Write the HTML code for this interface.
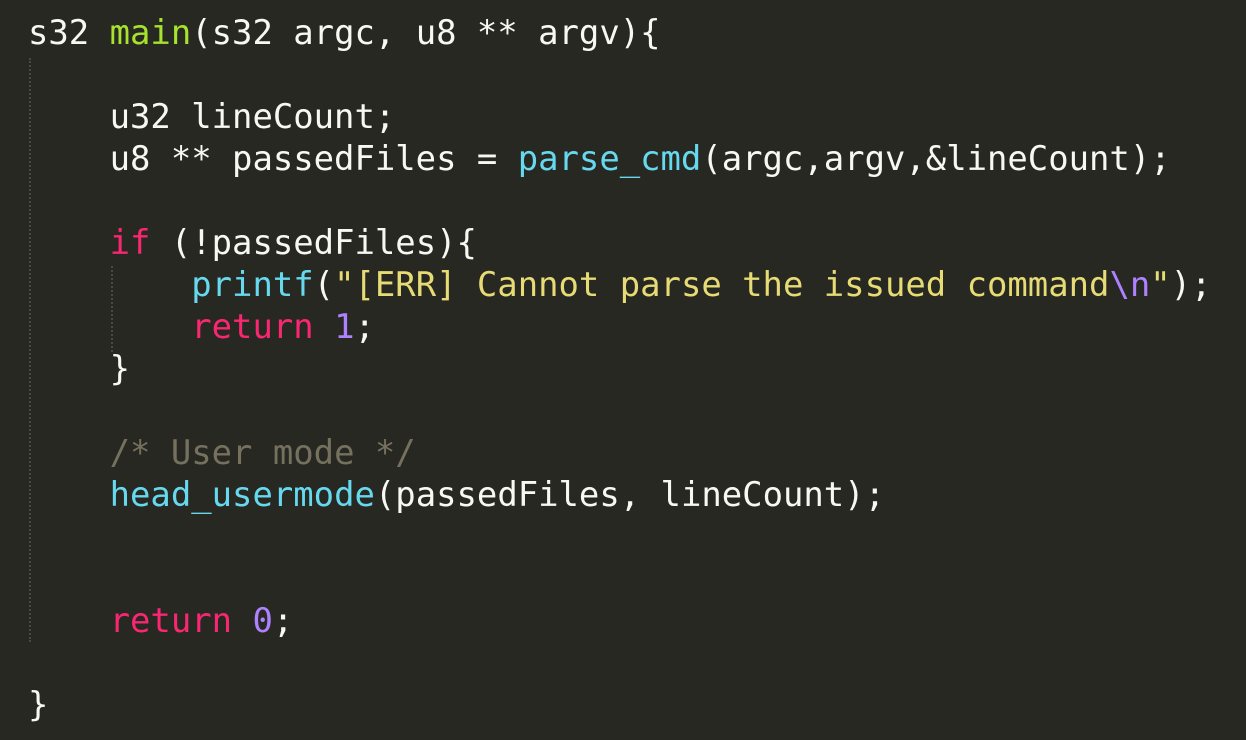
<!DOCTYPE html>
<html><head><style>
html,body{margin:0;padding:0;background:#272822;width:1246px;height:740px;overflow:hidden}
pre{margin:0;position:absolute;left:28px;top:12px;font-family:"DejaVu Sans Mono","Liberation Mono",monospace;font-size:33.9px;line-height:42px;color:#f8f8f2}
.g{position:absolute;width:0;border-left:2px dotted #4a4a42}
.f{color:#a6e22e}.c{color:#66d9ef}.k{color:#f92672}.n{color:#ae81ff}.s{color:#e6db74}.m{color:#75715e}
</style></head><body>
<div class="g" style="left:29px;top:58px;height:584px"></div>
<div class="g" style="left:111px;top:266px;height:86px"></div>
<pre>s32 <span class="f">main</span>(s32 argc, u8 ** argv){

    u32 lineCount;
    u8 ** passedFiles = <span class="c">parse_cmd</span>(argc,argv,&amp;lineCount);

    <span class="k">if</span> (!passedFiles){
        <span class="c">printf</span>(<span class="s">"[ERR] Cannot parse the issued command<span class="n">\n</span>"</span>);
        <span class="k">return</span> <span class="n">1</span>;
    }

    <span class="m">/* User mode */</span>
    <span class="c">head_usermode</span>(passedFiles, lineCount);


    <span class="k">return</span> <span class="n">0</span>;

}</pre>
</body></html>
